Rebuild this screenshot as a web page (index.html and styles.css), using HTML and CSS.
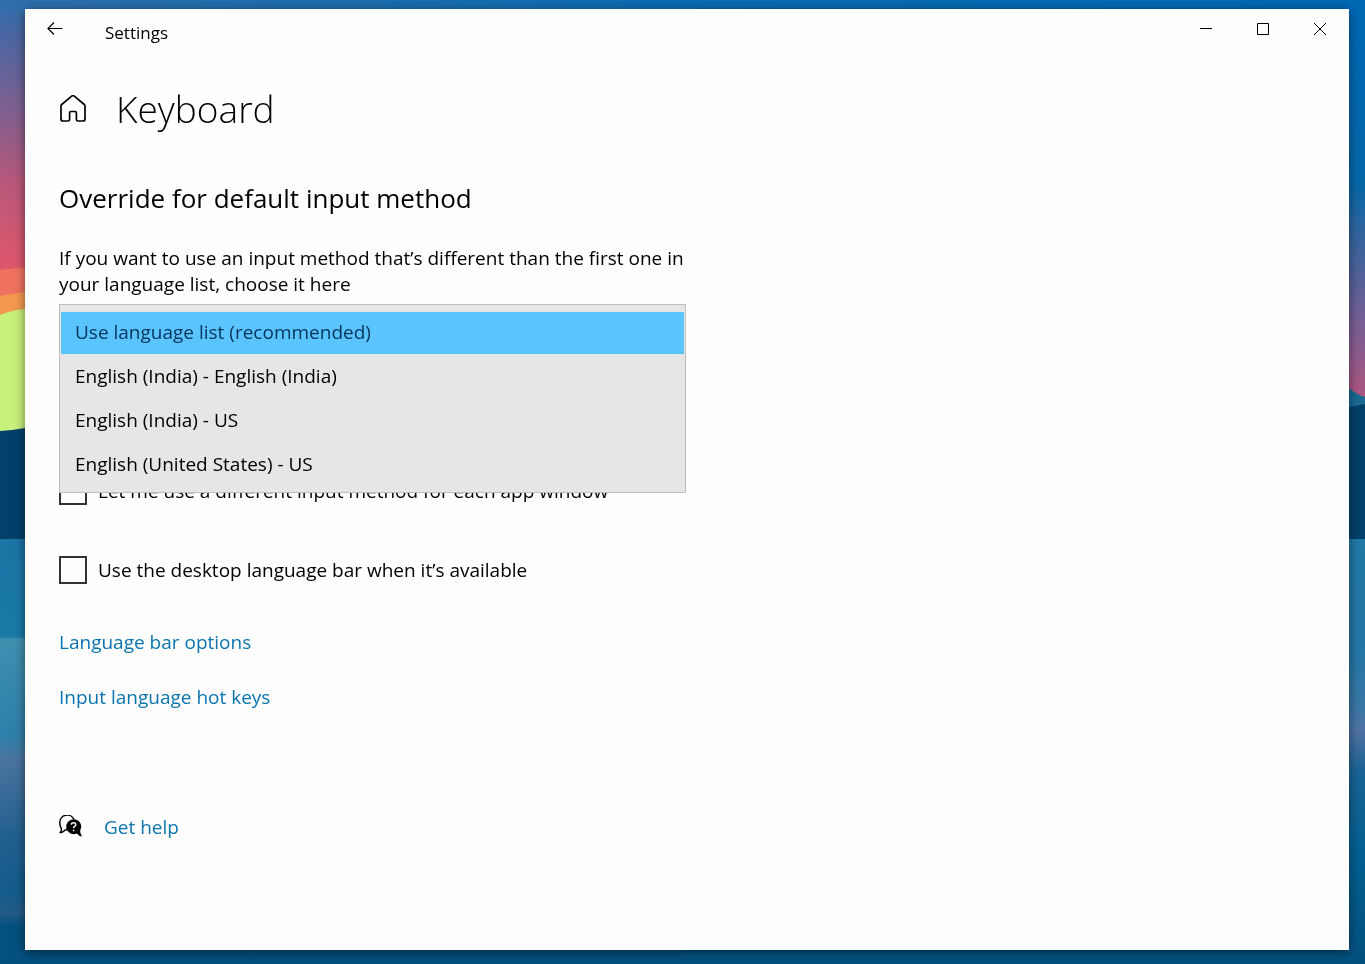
FILE: index.html
```html
<!DOCTYPE html>
<html lang="en">

<head>
    <meta charset="UTF-8">
    <meta name="viewport" content="width=device-width, initial-scale=1.0">
    <title>Settings - Keyboard</title>
    <link rel="stylesheet" href="styles.css">
</head>

<body>

    <!-- Desktop wallpaper -->
    <svg class="wallpaper" viewBox="0 0 1365 964" preserveAspectRatio="none" aria-hidden="true">
        <defs>
            <linearGradient id="sky-left" x1="0" y1="0" x2="0" y2="1">
                <stop offset="0" stop-color="#2f6fab" />
                <stop offset="0.13" stop-color="#4b66a2" />
                <stop offset="0.4" stop-color="#80608f" />
                <stop offset="0.65" stop-color="#b8587a" />
                <stop offset="1" stop-color="#e5566a" />
            </linearGradient>
            <linearGradient id="sky-right" x1="0" y1="0" x2="0" y2="1">
                <stop offset="0" stop-color="#0069b5" />
                <stop offset="0.45" stop-color="#0768a8" />
                <stop offset="0.56" stop-color="#2f659f" />
                <stop offset="0.8" stop-color="#7b5f94" />
                <stop offset="1" stop-color="#b9557d" />
            </linearGradient>
            <linearGradient id="sky-top" x1="0" y1="0" x2="1" y2="0">
                <stop offset="0" stop-color="#2f6fab" />
                <stop offset="0.5" stop-color="#0b6cb2" />
                <stop offset="1" stop-color="#0069b5" />
            </linearGradient>
            <linearGradient id="sea-left" x1="0" y1="0" x2="0" y2="1">
                <stop offset="0" stop-color="#1b75a6" />
                <stop offset="0.23" stop-color="#1a7aa8" />
                <stop offset="0.235" stop-color="#3f8fb0" />
                <stop offset="0.46" stop-color="#2f80aa" />
                <stop offset="0.52" stop-color="#4a749f" />
                <stop offset="0.7" stop-color="#22608f" />
                <stop offset="0.83" stop-color="#145c8b" />
                <stop offset="0.88" stop-color="#245b88" />
                <stop offset="0.91" stop-color="#05517e" />
                <stop offset="1" stop-color="#045080" />
            </linearGradient>
            <linearGradient id="sea-right" x1="0" y1="0" x2="0" y2="1">
                <stop offset="0" stop-color="#2279a5" />
                <stop offset="0.25" stop-color="#2377a6" />
                <stop offset="0.4" stop-color="#3a76a5" />
                <stop offset="0.45" stop-color="#5073a3" />
                <stop offset="0.55" stop-color="#1a6396" />
                <stop offset="0.75" stop-color="#036091" />
                <stop offset="1" stop-color="#04507f" />
            </linearGradient>
        </defs>
        <rect width="682" height="280" fill="url(#sky-left)" />
        <rect x="682" width="683" height="410" fill="url(#sky-right)" />
        <rect width="1365" height="10" fill="url(#sky-top)" />
        <path d="M0 270L25 267V300H0z" fill="#f0735f" />
        <path d="M0 296L25 292V320H0z" fill="#f3994f" />
        <path d="M0 315Q12 310 25 309V440H0z" fill="#c7f07c" />
        <path d="M0 431L12 430L25 428V540H0z" fill="#03416b" />
        <path d="M1349 388Q1357 395 1365 397V412H1349z" fill="#1a6a94" />
        <path d="M1349 407L1365 404V540H1349z" fill="#03416b" />
        <rect y="539" width="682" height="425" fill="url(#sea-left)" />
        <rect x="682" y="539" width="683" height="425" fill="url(#sea-right)" />
    </svg>

    <div class="window">
        <header class="titlebar">
            <button class="back-btn" type="button" aria-label="Back">
                <svg width="16" height="14" viewBox="0 0 16 14">
                    <path d="M15.5 6.5H1M7 0.5L1 6.5L7 12.5" />
                </svg>
            </button>
            <span class="app-name">Settings</span>
            <div class="window-controls">
                <button type="button" aria-label="Minimize">
                    <svg width="13" height="12" viewBox="0 0 13 12">
                        <path d="M0 5.5H12" />
                    </svg>
                </button>
                <button type="button" aria-label="Maximize">
                    <svg width="13" height="12" viewBox="0 0 13 12">
                        <path d="M0.5 0.5H11.5V11.5H0.5z" />
                    </svg>
                </button>
                <button type="button" aria-label="Close">
                    <svg width="13" height="12" viewBox="0 0 13 12">
                        <path d="M0 0L12 12M12 0L0 12" />
                    </svg>
                </button>
            </div>
        </header>

        <main class="content">
            <div class="page-title">
                <button class="home-btn" type="button" aria-label="Home">
                    <svg width="28" height="28" viewBox="0 0 28 28">
                        <path d="M2 11Q2 10.1 2.7 9.5L13 0.9Q14 0.2 15 0.9L25.3 9.5Q26 10.1 26 11V24Q26 26 24 26H19Q17.4 26 17.4 24.4V18Q17.4 16.5 16 16.5H12Q10.6 16.5 10.6 18V24.4Q10.6 26 9 26H4Q2 26 2 24z" />
                    </svg>
                </button>
                <h1>Keyboard</h1>
            </div>

            <h2>Override for default input method</h2>

            <label class="description" for="input-method">If you want to use an input method that’s different than the first one in your language list, choose it here</label>

            <div class="dropdown">
                <select id="input-method" size="4">
                    <option selected>Use language list (recommended)</option>
                    <option>English (India) - English (India)</option>
                    <option>English (India) - US</option>
                    <option>English (United States) - US</option>
                </select>
            </div>

            <div class="checks">
                <label class="check">
                    <input type="checkbox">
                    <span>Let me use a different input method for each app window</span>
                </label>
                <label class="check">
                    <input type="checkbox">
                    <span>Use the desktop language bar when it’s available</span>
                </label>
            </div>

            <nav class="links">
                <a href="#">Language bar options</a>
                <a href="#">Input language hot keys</a>
            </nav>

            <div class="help">
                <svg width="24" height="24" viewBox="0 0 24 24" aria-hidden="true">
                    <path class="bubble-line" d="M8 14.4Q5.8 14.8 4.6 16.2Q3.2 17.6 1.3 17.6Q2.8 15.6 2.3 13.4Q0.8 11 0.8 8A7.4 7.4 0 0 1 15 4.6" />
                    <path class="bubble-fill" d="M14.6 4.2A7.4 7.4 0 0 1 21.2 15.2Q20.8 18.4 23 21.4Q20 21.2 17.6 18.6A7.5 7.5 0 1 1 14.6 4.2z" />
                    <path class="bubble-mark" d="M12.3 9.6Q12.4 7.7 14.6 7.7Q16.8 7.7 16.8 9.5Q16.8 10.7 15.6 11.4Q14.6 12 14.6 13.2M14.6 14.7V16.2" />
                </svg>
                <a href="#">Get help</a>
            </div>
        </main>
    </div>

</body>

</html>
```
FILE: styles.css
```css
* {
    margin: 0;
    padding: 0;
    box-sizing: border-box;
}

body {
    font-family: "Segoe UI", "Open Sans", "Noto Sans", sans-serif;
    font-size: 19px;
    line-height: 26px;
    color: #000;
    background-color: #04507f;
    display: flex;
    min-height: 100vh;
    padding: 9px 16px 14px 25px;
}

.wallpaper {
    position: fixed;
    inset: 0;
    width: 100%;
    height: 100%;
    z-index: -1;
}

.window {
    flex: 1;
    background-color: #fefefe;
    box-shadow: 0 2px 10px rgba(0, 0, 0, 0.5);
}

button {
    background: none;
    border: none;
    display: flex;
    align-items: center;
    justify-content: center;
}

button svg {
    fill: none;
    stroke: #000;
}

.titlebar {
    display: flex;
    align-items: flex-start;
    height: 49px;
}

.back-btn {
    width: 60px;
    height: 40px;
}

.back-btn svg {
    stroke-width: 1.2;
}

.app-name {
    font-size: 17px;
    line-height: 48px;
    margin-left: 20px;
}

.window-controls {
    display: flex;
    margin-left: auto;
}

.window-controls button {
    width: 57px;
    height: 40px;
}

.content {
    padding: 23px 34px;
}

.page-title {
    display: flex;
    align-items: center;
    gap: 29px;
}

.home-btn svg {
    stroke-width: 1.7;
}

h1 {
    font-size: 37px;
    font-weight: 300;
    line-height: 56px;
}

h2 {
    font-size: 26px;
    font-weight: 400;
    line-height: 36px;
    margin-top: 43px;
}

.description {
    display: block;
    max-width: 627px;
    margin-top: 29px;
}

/* The open list lies over the controls below it */
.dropdown {
    position: relative;
    max-width: 627px;
    height: 42px;
    margin-top: 7px;
}

.dropdown select {
    position: absolute;
    top: 0;
    left: 0;
    width: 100%;
    height: 189px;
    padding: 7px 1px 5px;
    font: inherit;
    color: #000;
    background-color: #e6e6e6;
    border: 1px solid #bdbdbd;
    border-radius: 0;
    outline: none;
    overflow: hidden;
}

.dropdown option {
    height: 44px;
    padding: 8px 14px;
}

.dropdown option:checked {
    height: 42px;
    padding-top: 7px;
    margin-bottom: 1px;
    color: #06335a;
    background: #5ac4ff linear-gradient(#5ac4ff, #5ac4ff);
}

.checks {
    display: flex;
    flex-direction: column;
    gap: 51px;
    margin-top: 131px;
}

.check {
    display: flex;
    align-items: center;
    gap: 11px;
    height: 28px;
}

.check input {
    appearance: none;
    width: 28px;
    height: 28px;
    border: 2px solid #333;
    background-color: #fefefe;
}

.links {
    display: flex;
    flex-direction: column;
    align-items: flex-start;
    gap: 29px;
    margin-top: 45px;
}

a {
    color: #0a74b0;
    text-decoration: none;
}

.help {
    display: flex;
    align-items: center;
    gap: 21px;
    margin-top: 104px;
}

.bubble-line {
    fill: none;
    stroke: #000;
    stroke-width: 1.5;
}

.bubble-fill {
    fill: #000;
}

.bubble-mark {
    fill: none;
    stroke: #fff;
    stroke-width: 1.5;
}
```
